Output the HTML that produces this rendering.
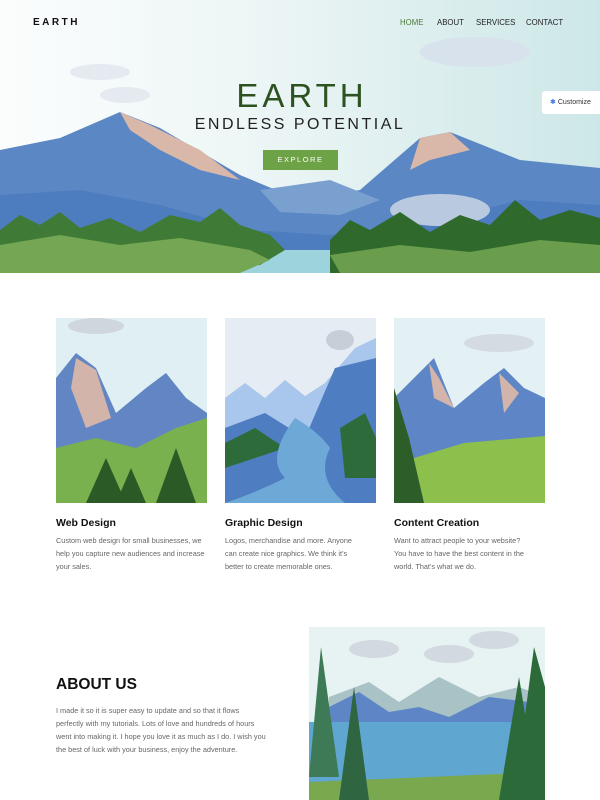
<!DOCTYPE html>
<html><head><meta charset="utf-8"><style>
*{margin:0;padding:0;box-sizing:border-box}
body{width:600px;height:800px;overflow:hidden;background:#fff;font-family:"Liberation Sans",sans-serif;position:relative}
.abs{position:absolute}
.nav a{position:absolute;top:18px;font-size:7.8px;color:#222;text-decoration:none}
h3{position:absolute;font-size:10.5px;font-weight:bold;color:#111}
p.t{position:absolute;font-size:7.3px;line-height:13px;color:#666;width:150px}
</style></head><body>
<svg class="abs" style="left:0;top:0" width="600" height="273" viewBox="0 0 600 273">
<defs><linearGradient id="sky" x1="0" x2="1" y1="0" y2="0"><stop offset="0" stop-color="#fbfdfd"/><stop offset="0.4" stop-color="#eef6f6"/><stop offset="1" stop-color="#cde7e8"/></linearGradient></defs>
<rect width="600" height="273" fill="url(#sky)"/>
<ellipse cx="100" cy="72" rx="30" ry="8" fill="#e4eaf0"/><ellipse cx="125" cy="95" rx="25" ry="8" fill="#e4eaf0"/>
<ellipse cx="475" cy="52" rx="55" ry="15" fill="#d8e2ec"/>
<path d="M0 150 L60 138 L120 112 L160 128 L240 175 L300 200 L360 190 L420 138 L450 132 L520 160 L600 168 L600 273 L0 273Z" fill="#5b87c5"/>
<path d="M120 112 L150 125 L200 150 L240 180 L200 170 L160 150 L130 130Z" fill="#d9b8aa"/>
<path d="M420 138 L450 132 L470 150 L430 160 L410 170Z" fill="#d9b8aa"/>
<path d="M260 190 L330 180 L380 200 L340 215 L280 212Z" fill="#7aa0cf"/>
<path d="M0 195 L80 190 L160 205 L250 230 L330 235 L420 225 L520 200 L600 205 L600 273 L0 273Z" fill="#4e7dbf"/>
<ellipse cx="440" cy="210" rx="50" ry="16" fill="#b9c9df"/>
<rect x="0" y="250" width="600" height="23" fill="#9dd3dd"/>
<path d="M0 230 L20 215 L40 225 L60 212 L80 228 L110 218 L140 232 L170 215 L200 222 L220 208 L240 225 L270 235 L285 250 L260 265 L0 273Z" fill="#3f7a36"/>
<path d="M0 245 L60 235 L120 245 L180 238 L250 250 L270 260 L240 273 L0 273Z" fill="#74a653"/>
<path d="M330 240 L350 220 L370 230 L400 212 L430 232 L460 215 L490 225 L515 200 L540 220 L570 210 L600 218 L600 273 L330 273Z" fill="#2f6a2c"/>
<path d="M330 255 L400 245 L470 252 L540 240 L600 245 L600 273 L340 273Z" fill="#6a9e4c"/>
</svg>
<div class="abs" style="left:33px;top:17px;font-size:10px;font-weight:bold;letter-spacing:2.5px;color:#111">EARTH</div>
<div class="nav"><a style="left:400px;color:#4a7a3a">HOME</a><a style="left:437px">ABOUT</a><a style="left:476px">SERVICES</a><a style="left:526px">CONTACT</a></div>
<div class="abs" style="left:542px;top:91px;width:58px;height:23px;background:#fff;border-radius:3px 0 0 3px;font-size:7px;color:#333;padding:7px 0 0 8px"><span style="color:#3b6ee8">✱</span> Customize</div>
<div class="abs" style="left:0;width:600px;top:77px;text-align:center;font-size:33px;letter-spacing:4px;color:#2d5220;padding-left:4px">EARTH</div>
<div class="abs" style="left:0;width:600px;top:116px;text-align:center;font-size:16px;letter-spacing:2.5px;color:#222">ENDLESS POTENTIAL</div>
<div class="abs" style="left:263px;top:150px;width:75px;height:20px;background:#6ea246;color:#fff;font-size:7.5px;letter-spacing:1.5px;text-align:center;line-height:20px">EXPLORE</div>

<svg class="abs" style="left:56px;top:318px" width="151" height="185"><rect width="151" height="185" fill="#dfeff3"/><ellipse cx="40" cy="8" rx="28" ry="8" fill="#cfd6de"/><path d="M0 60 L20 35 L40 50 L60 95 L90 70 L110 55 L130 80 L151 95 L151 185 L0 185Z" fill="#6286c4"/><path d="M20 40 L40 52 L55 100 L30 110 L15 70Z" fill="#d2b4aa"/><path d="M0 130 L40 120 L80 130 L120 110 L151 100 L151 185 L0 185Z" fill="#7ab14f"/><path d="M30 185 L50 140 L70 185Z M100 185 L120 130 L140 185Z M60 185 L75 150 L90 185Z" fill="#2c5a26"/></svg>
<svg class="abs" style="left:225px;top:318px" width="151" height="185"><rect width="151" height="185" fill="#e6ecf3"/><ellipse cx="115" cy="22" rx="14" ry="10" fill="#c8ced8"/><path d="M0 80 L20 65 L40 80 L60 62 L80 78 L100 65 L130 30 L151 20 L151 185 L0 185Z" fill="#a9c6ec"/><path d="M0 110 L40 95 L80 120 L110 50 L151 40 L151 185 L0 185Z" fill="#4e7dc1"/><path d="M0 125 L30 110 L60 130 L0 150Z M115 110 L140 95 L151 120 L151 160 L120 160Z" fill="#2e6b3a"/><path d="M70 100 Q40 140 60 160 Q30 175 0 185 L120 185 Q90 160 105 130 Q95 115 70 100Z" fill="#6ea8d6"/></svg>
<svg class="abs" style="left:394px;top:318px" width="151" height="185"><rect width="151" height="185" fill="#e3f1f4"/><ellipse cx="105" cy="25" rx="35" ry="9" fill="#d5dbe2"/><path d="M0 80 L25 55 L40 40 L60 90 L90 65 L110 50 L130 70 L151 80 L151 185 L0 185Z" fill="#5e86c6"/><path d="M35 45 L45 60 L60 90 L40 80Z M105 55 L125 75 L110 95Z" fill="#d2b4aa"/><path d="M20 140 L70 125 L151 118 L151 185 L20 185Z" fill="#8dbf4d"/><path d="M0 70 L15 120 L30 185 L0 185Z" fill="#2d5e2a"/></svg>

<h3 style="left:56px;top:517px">Web Design</h3>
<h3 style="left:225px;top:517px">Graphic Design</h3>
<h3 style="left:394px;top:517px">Content Creation</h3>
<p class="t" style="left:56px;top:534px">Custom web design for small businesses, we help you capture new audiences and increase your sales.</p>
<p class="t" style="left:225px;top:534px;width:140px">Logos, merchandise and more. Anyone can create nice graphics. We think it's better to create memorable ones.</p>
<p class="t" style="left:394px;top:534px;width:140px">Want to attract people to your website? You have to have the best content in the world. That's what we do.</p>

<div class="abs" style="left:56px;top:676px;font-size:15.5px;font-weight:bold;color:#111">ABOUT US</div>
<p class="t" style="left:56px;top:704px;width:212px">I made it so it is super easy to update and so that it flows perfectly with my tutorials. Lots of love and hundreds of hours went into making it. I hope you love it as much as I do. I wish you the best of luck with your business, enjoy the adventure.</p>

<svg class="abs" style="left:309px;top:627px" width="236" height="173"><rect width="236" height="173" fill="#e6f3f2"/><ellipse cx="65" cy="22" rx="25" ry="9" fill="#d3d9e0"/><ellipse cx="140" cy="27" rx="25" ry="9" fill="#d3d9e0"/><ellipse cx="185" cy="13" rx="25" ry="9" fill="#d3d9e0"/><path d="M20 70 L60 55 L90 75 L130 50 L170 70 L210 60 L236 70 L236 100 L20 100Z" fill="#a9c2c6"/><path d="M20 80 L50 65 L80 85 L110 80 L140 90 L180 70 L220 75 L236 90 L236 100 L20 100Z" fill="#5e86c6"/><rect x="0" y="95" width="236" height="60" fill="#5fa6d0"/><path d="M0 155 L236 145 L236 173 L0 173Z" fill="#7aa84e"/><path d="M0 150 L12 20 L30 150Z" fill="#3e7a56"/><path d="M30 173 L45 60 L60 173Z" fill="#2f6540"/><path d="M190 173 L210 50 L230 173Z M205 173 L225 20 L236 60 L236 173Z" fill="#2d6a3a"/></svg>
</body></html>
